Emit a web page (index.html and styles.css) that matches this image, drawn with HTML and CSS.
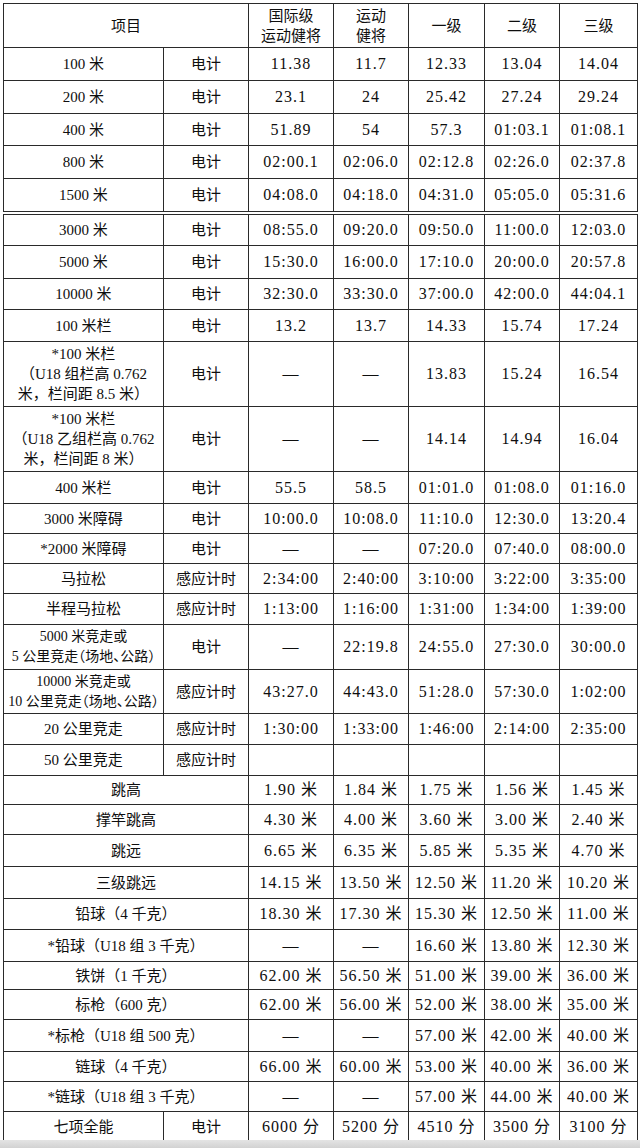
FILE: index.html
```html
<!DOCTYPE html>
<html lang="zh">
<head>
<meta charset="utf-8">
<title>田径运动员技术等级标准</title>
<link rel="stylesheet" href="styles.css">
</head>
<body>
<div class="page">
<table class="grid">
<colgroup><col class="c1"><col class="c2"><col class="c3"><col class="c4"><col class="c5"><col class="c6"><col class="c7"></colgroup>
<tr class="h44"><td colspan="2">项目</td><td class="hd">国际级<br>运动健将</td><td class="hd">运动<br>健将</td><td>一级</td><td>二级</td><td>三级</td></tr>
<tr class="h33"><td>100 米</td><td>电计</td><td class="n">11.38</td><td class="n">11.7</td><td class="n">12.33</td><td class="n">13.04</td><td class="n">14.04</td></tr>
<tr class="h33"><td>200 米</td><td>电计</td><td class="n">23.1</td><td class="n">24</td><td class="n">25.42</td><td class="n">27.24</td><td class="n">29.24</td></tr>
<tr class="h32"><td>400 米</td><td>电计</td><td class="n">51.89</td><td class="n">54</td><td class="n">57.3</td><td class="n">01:03.1</td><td class="n">01:08.1</td></tr>
<tr class="h33"><td>800 米</td><td>电计</td><td class="n">02:00.1</td><td class="n">02:06.0</td><td class="n">02:12.8</td><td class="n">02:26.0</td><td class="n">02:37.8</td></tr>
<tr class="h33"><td>1500 米</td><td>电计</td><td class="n">04:08.0</td><td class="n">04:18.0</td><td class="n">04:31.0</td><td class="n">05:05.0</td><td class="n">05:31.6</td></tr>
</table>
<table class="grid second">
<colgroup><col class="c1"><col class="c2"><col class="c3"><col class="c4"><col class="c5"><col class="c6"><col class="c7"></colgroup>
<tr class="h31"><td>3000 米</td><td>电计</td><td class="n">08:55.0</td><td class="n">09:20.0</td><td class="n">09:50.0</td><td class="n">11:00.0</td><td class="n">12:03.0</td></tr>
<tr class="h33"><td>5000 米</td><td>电计</td><td class="n">15:30.0</td><td class="n">16:00.0</td><td class="n">17:10.0</td><td class="n">20:00.0</td><td class="n">20:57.8</td></tr>
<tr class="h31"><td>10000 米</td><td>电计</td><td class="n">32:30.0</td><td class="n">33:30.0</td><td class="n">37:00.0</td><td class="n">42:00.0</td><td class="n">44:04.1</td></tr>
<tr class="h32"><td>100 米栏</td><td>电计</td><td class="n">13.2</td><td class="n">13.7</td><td class="n">14.33</td><td class="n">15.74</td><td class="n">17.24</td></tr>
<tr class="h65"><td class="ml">*100 米栏<br>（U18 组栏高 0.762<br>米，栏间距 8.5 米）</td><td>电计</td><td class="n">—</td><td class="n">—</td><td class="n">13.83</td><td class="n">15.24</td><td class="n">16.54</td></tr>
<tr class="h65"><td class="ml">*100 米栏<br>（U18 乙组栏高 0.762<br>米，栏间距 8 米）</td><td>电计</td><td class="n">—</td><td class="n">—</td><td class="n">14.14</td><td class="n">14.94</td><td class="n">16.04</td></tr>
<tr class="h32"><td>400 米栏</td><td>电计</td><td class="n">55.5</td><td class="n">58.5</td><td class="n">01:01.0</td><td class="n">01:08.0</td><td class="n">01:16.0</td></tr>
<tr class="h30"><td>3000 米障碍</td><td>电计</td><td class="n">10:00.0</td><td class="n">10:08.0</td><td class="n">11:10.0</td><td class="n">12:30.0</td><td class="n">13:20.4</td></tr>
<tr class="h30"><td>*2000 米障碍</td><td>电计</td><td class="n">—</td><td class="n">—</td><td class="n">07:20.0</td><td class="n">07:40.0</td><td class="n">08:00.0</td></tr>
<tr class="h30"><td>马拉松</td><td>感应计时</td><td class="n">2:34:00</td><td class="n">2:40:00</td><td class="n">3:10:00</td><td class="n">3:22:00</td><td class="n">3:35:00</td></tr>
<tr class="h31"><td>半程马拉松</td><td>感应计时</td><td class="n">1:13:00</td><td class="n">1:16:00</td><td class="n">1:31:00</td><td class="n">1:34:00</td><td class="n">1:39:00</td></tr>
<tr class="h45"><td class="ml tight">5000 米竞走或<br>5 公里竞走（场地、公路）</td><td>电计</td><td class="n">—</td><td class="n">22:19.8</td><td class="n">24:55.0</td><td class="n">27:30.0</td><td class="n">30:00.0</td></tr>
<tr class="h44"><td class="ml tight">10000 米竞走或<br>10 公里竞走（场地、公路）</td><td>感应计时</td><td class="n">43:27.0</td><td class="n">44:43.0</td><td class="n">51:28.0</td><td class="n">57:30.0</td><td class="n">1:02:00</td></tr>
<tr class="h31"><td>20 公里竞走</td><td>感应计时</td><td class="n">1:30:00</td><td class="n">1:33:00</td><td class="n">1:46:00</td><td class="n">2:14:00</td><td class="n">2:35:00</td></tr>
<tr class="h31"><td>50 公里竞走</td><td>感应计时</td><td></td><td></td><td></td><td></td><td></td></tr>
<tr class="h29"><td colspan="2">跳高</td><td class="n">1.90 米</td><td class="n">1.84 米</td><td class="n">1.75 米</td><td class="n">1.56 米</td><td class="n">1.45 米</td></tr>
<tr class="h30"><td colspan="2">撑竿跳高</td><td class="n">4.30 米</td><td class="n">4.00 米</td><td class="n">3.60 米</td><td class="n">3.00 米</td><td class="n">2.40 米</td></tr>
<tr class="h32"><td colspan="2">跳远</td><td class="n">6.65 米</td><td class="n">6.35 米</td><td class="n">5.85 米</td><td class="n">5.35 米</td><td class="n">4.70 米</td></tr>
<tr class="h32"><td colspan="2">三级跳远</td><td class="n">14.15 米</td><td class="n">13.50 米</td><td class="n">12.50 米</td><td class="n">11.20 米</td><td class="n">10.20 米</td></tr>
<tr class="h31"><td colspan="2">铅球（4 千克）</td><td class="n">18.30 米</td><td class="n">17.30 米</td><td class="n">15.30 米</td><td class="n">12.50 米</td><td class="n">11.00 米</td></tr>
<tr class="h32"><td colspan="2">*铅球（U18 组 3 千克）</td><td class="n">—</td><td class="n">—</td><td class="n">16.60 米</td><td class="n">13.80 米</td><td class="n">12.30 米</td></tr>
<tr class="h28"><td colspan="2">铁饼（1 千克）</td><td class="n">62.00 米</td><td class="n">56.50 米</td><td class="n">51.00 米</td><td class="n">39.00 米</td><td class="n">36.00 米</td></tr>
<tr class="h30"><td colspan="2">标枪（600 克）</td><td class="n">62.00 米</td><td class="n">56.00 米</td><td class="n">52.00 米</td><td class="n">38.00 米</td><td class="n">35.00 米</td></tr>
<tr class="h32"><td colspan="2">*标枪（U18 组 500 克）</td><td class="n">—</td><td class="n">—</td><td class="n">57.00 米</td><td class="n">42.00 米</td><td class="n">40.00 米</td></tr>
<tr class="h30"><td colspan="2">链球（4 千克）</td><td class="n">66.00 米</td><td class="n">60.00 米</td><td class="n">53.00 米</td><td class="n">40.00 米</td><td class="n">36.00 米</td></tr>
<tr class="h30"><td colspan="2">*链球（U18 组 3 千克）</td><td class="n">—</td><td class="n">—</td><td class="n">57.00 米</td><td class="n">44.00 米</td><td class="n">40.00 米</td></tr>
<tr class="h30"><td>七项全能</td><td>电计</td><td class="n">6000 分</td><td class="n">5200 分</td><td class="n">4510 分</td><td class="n">3500 分</td><td class="n">3100 分</td></tr>
</table>
</div>
<div class="strip"></div>
</body>
</html>
```
FILE: styles.css
```css
html, body {
  margin: 0;
  padding: 0;
  background: #ffffff;
}
.page {
  padding: 3px 3px 0 3px;
  height: 1140px;
  box-sizing: border-box;
}
.grid {
  border-collapse: collapse;
  table-layout: fixed;
  width: 634px;
  font-family: "Liberation Serif", "Noto Sans CJK SC", serif;
  font-size: 15px;
  color: #0e0e0e;
}
.second {
  margin-top: 2px;
}
.grid td {
  border: 1px solid #2a2a2a;
  padding: 0;
  text-align: center;
  vertical-align: middle;
  line-height: 20px;
  white-space: nowrap;
  overflow: hidden;
}
.c1 { width: 160px; }
.c2 { width: 85px; }
.c3 { width: 85px; }
.c4 { width: 75px; }
.c5 { width: 76px; }
.c6 { width: 75px; }
.c7 { width: 78px; }
.n {
  font-size: 16px;
  letter-spacing: 1px;
}
.hd {
  line-height: 20px;
}
.ml {
  line-height: 20px;
}
.tight {
  font-size: 14px;
  font-feature-settings: "halt";
  line-height: 19px;
}
.h28 { height: 28px; }
.h29 { height: 29px; }
.h30 { height: 30px; }
.h31 { height: 31px; }
.h32 { height: 32px; }
.h33 { height: 33px; }
.h44 { height: 44px; }
.h45 { height: 45px; }
.h65 { height: 65px; }
.strip {
  height: 8px;
  background: linear-gradient(#e4e4e4, #d2d2d2);
}
```
